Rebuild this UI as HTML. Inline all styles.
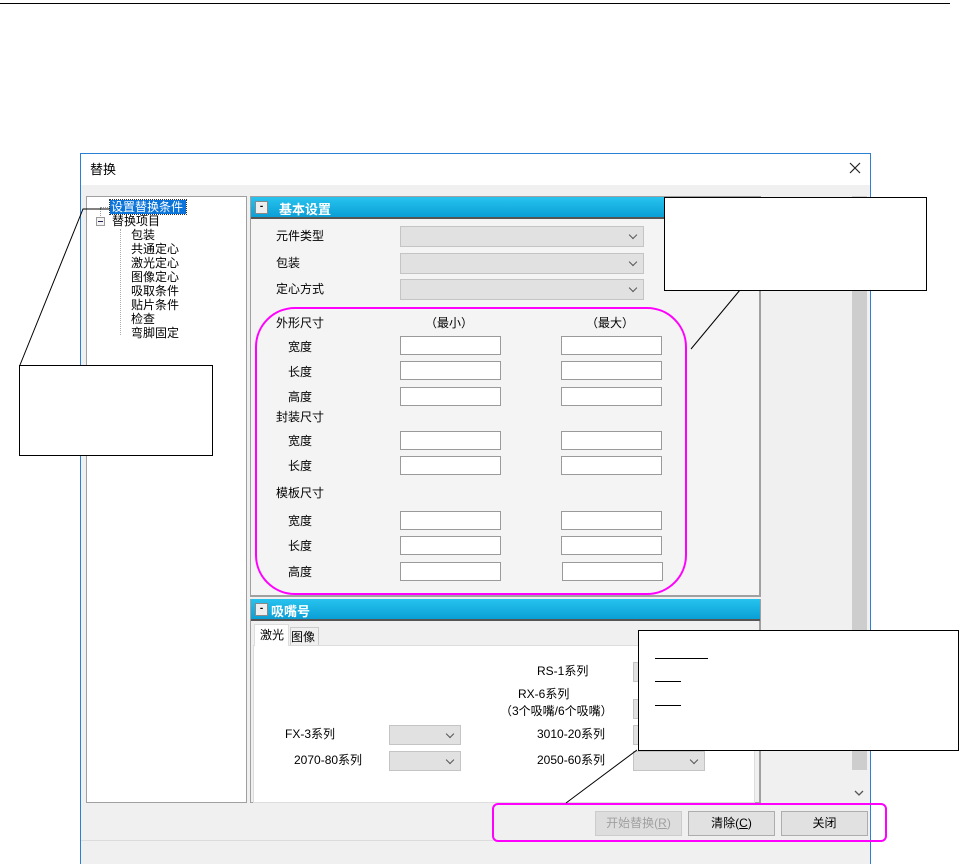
<!DOCTYPE html>
<html><head><meta charset="utf-8"><style>
*{margin:0;padding:0;box-sizing:border-box}
body{width:960px;height:864px;background:#fff;position:relative;overflow:hidden;font-family:"Liberation Sans","Noto Sans CJK SC",sans-serif;font-size:12px;color:#000}
.a{position:absolute}
.t{position:absolute;white-space:nowrap;line-height:14px}
.cb{position:absolute;background:#e1e1e1;border:1px solid #c4c4c4}
.cb:after{content:"";position:absolute;right:7px;top:5px;width:5px;height:5px;border-right:1px solid #555;border-bottom:1px solid #555;transform:rotate(45deg)}
.in{position:absolute;background:#fff;border:1px solid #9a9a9a;width:101px;height:19px}
.hdr{position:absolute;height:22px;background:linear-gradient(#27c3ee,#0a9fd6);border-bottom:2px solid #555;color:#fff;font-weight:bold;font-size:13px}
.hdr .m{position:absolute;left:4px;top:4px;width:13px;height:13px;background:#eee;border:1px solid #888;color:#000;font-size:10px;line-height:10px;text-align:center}
.btn{position:absolute;top:811px;height:25px;width:87px;background:#e1e1e1;border:1px solid #adadad;text-align:center;line-height:23px;font-size:12px}
</style></head><body>
<div class="a" style="left:0;top:3px;width:950px;height:1px;background:#000"></div>

<div class="a" style="left:80px;top:153px;width:791px;height:711px;border:1px solid #2b7fd4;border-bottom:none;background:#f0f0f0"></div>
<div class="a" style="left:81px;top:154px;width:789px;height:31px;background:#fff"></div>
<div class="t" style="left:90px;top:163px;font-size:13px">替换</div>
<svg class="a" style="left:849px;top:162px" width="12" height="12"><path d="M1 1L11 11M11 1L1 11" stroke="#222" stroke-width="1.2"/></svg>

<div class="a" style="left:86px;top:196px;width:161px;height:607px;background:#fff;border:1px solid #a0a0a0"></div>
<div class="a" style="left:110px;top:200px;width:76px;height:14px;background:#0a74da;outline:1px dotted #333"></div>
<div class="t" style="left:111px;top:200px;color:#fff;font-size:12px">设置替换条件</div>
<div class="a" style="left:100px;top:207px;width:10px;border-top:1px dotted #999"></div>
<div class="a" style="left:100px;top:208px;height:8px;border-left:1px dotted #999"></div>
<div class="a" style="left:96px;top:217px;width:9px;height:9px;border:1px solid #999;background:#f4f4f4"></div>
<div class="a" style="left:98px;top:221px;width:5px;height:1px;background:#225"></div>
<div class="t" style="left:112px;top:214px">替换项目</div>
<div class="a" style="left:120px;top:229px;height:106px;border-left:1px dotted #aaa"></div>
<div class="t" style="left:131px;top:228px;line-height:14px">包装<br>共通定心<br>激光定心<br>图像定心<br>吸取条件<br>贴片条件<br>检查<br>弯脚固定</div>

<div class="a" style="left:250px;top:196px;width:511px;height:401px;background:#f4f4f4;border:1px solid #a0a0a0;border-right:2px solid #a0a0a0;border-bottom:2px solid #a0a0a0"></div>
<div class="hdr" style="left:251px;top:197px;width:509px"><div class="m">-</div><span class="a" style="left:28px;top:2px">基本设置</span></div>
<div class="t" style="left:276px;top:229px">元件类型</div>
<div class="t" style="left:276px;top:256px">包装</div>
<div class="t" style="left:276px;top:282px">定心方式</div>
<div class="cb" style="left:400px;top:226px;width:244px;height:21px"></div>
<div class="cb" style="left:400px;top:253px;width:244px;height:21px"></div>
<div class="cb" style="left:400px;top:279px;width:244px;height:21px"></div>
<div class="t" style="left:276px;top:316px">外形尺寸</div>
<div class="t" style="left:425px;top:316px">（最小）</div>
<div class="t" style="left:586px;top:316px">（最大）</div>
<div class="t" style="left:288px;top:340px">宽度</div>
<div class="t" style="left:288px;top:365px">长度</div>
<div class="t" style="left:288px;top:390px">高度</div>
<div class="t" style="left:276px;top:410px">封装尺寸</div>
<div class="t" style="left:288px;top:434px">宽度</div>
<div class="t" style="left:288px;top:459px">长度</div>
<div class="t" style="left:276px;top:486px">模板尺寸</div>
<div class="t" style="left:288px;top:514px">宽度</div>
<div class="t" style="left:288px;top:539px">长度</div>
<div class="t" style="left:288px;top:565px">高度</div>
<div class="in" style="left:400px;top:336px"></div><div class="in" style="left:561px;top:336px"></div>
<div class="in" style="left:400px;top:361px"></div><div class="in" style="left:561px;top:361px"></div>
<div class="in" style="left:400px;top:387px"></div><div class="in" style="left:561px;top:387px"></div>
<div class="in" style="left:400px;top:431px"></div><div class="in" style="left:561px;top:431px"></div>
<div class="in" style="left:400px;top:456px"></div><div class="in" style="left:561px;top:456px"></div>
<div class="in" style="left:400px;top:511px"></div><div class="in" style="left:561px;top:511px"></div>
<div class="in" style="left:400px;top:536px"></div><div class="in" style="left:561px;top:536px"></div>
<div class="in" style="left:400px;top:562px"></div><div class="in" style="left:562px;top:562px"></div>
<div class="a" style="left:255px;top:307px;width:432px;height:288px;border:2px solid #f0f;border-radius:40px"></div>

<div class="a" style="left:852px;top:196px;width:15px;height:604px;background:#cdcdcd"></div>
<div class="a" style="left:852px;top:770px;width:15px;height:32px;background:#f0f0f0"></div>
<svg class="a" style="left:854px;top:789px" width="10" height="8"><path d="M1 2L5 6L9 2" stroke="#555" fill="none" stroke-width="1.3"/></svg>

<div class="a" style="left:250px;top:599px;width:511px;height:204px;background:#f0f0f0;border:1px solid #a0a0a0;border-right:2px solid #a0a0a0"></div>
<div class="hdr" style="left:251px;top:599px;width:509px"><div class="m">-</div><span class="a" style="left:20px;top:2px">吸嘴号</span></div>
<div class="a" style="left:253px;top:645px;width:502px;height:158px;background:#fff;border:1px solid #ddd"></div>
<div class="a" style="left:254px;top:624px;width:35px;height:22px;background:#fff;border:1px solid #ddd;border-bottom:none"></div>
<div class="t" style="left:260px;top:628px">激光</div>
<div class="a" style="left:290px;top:627px;width:29px;height:18px;background:#f0f0f0;border:1px solid #ccc;border-bottom:none"></div>
<div class="t" style="left:291px;top:630px">图像</div>
<div class="t" style="left:537px;top:664px">RS-1系列</div>
<div class="t" style="left:518px;top:687px">RX-6系列</div>
<div class="t" style="left:500px;top:704px">（3个吸嘴/6个吸嘴）</div>
<div class="t" style="left:285px;top:727px">FX-3系列</div>
<div class="t" style="left:294px;top:753px">2070-80系列</div>
<div class="t" style="left:537px;top:727px">3010-20系列</div>
<div class="t" style="left:537px;top:753px">2050-60系列</div>
<div class="cb" style="left:633px;top:662px;width:52px;height:20px"></div>
<div class="cb" style="left:633px;top:699px;width:52px;height:20px"></div>
<div class="cb" style="left:389px;top:725px;width:72px;height:20px"></div>
<div class="cb" style="left:389px;top:751px;width:72px;height:20px"></div>
<div class="cb" style="left:633px;top:725px;width:72px;height:20px"></div>
<div class="cb" style="left:633px;top:751px;width:72px;height:20px"></div>

<div class="btn" style="left:595px;color:#a0a0a0;border-color:#ccc;background:#ddd">开始替换(<u>R</u>)</div>
<div class="btn" style="left:688px">清除(<u>C</u>)</div>
<div class="btn" style="left:781px">关闭</div>
<div class="a" style="left:81px;top:840px;width:789px;height:1px;background:#dcdcdc"></div>
<div class="a" style="left:492px;top:803px;width:395px;height:39px;border:2px solid #f0f;border-radius:6px"></div>

<svg class="a" style="left:0;top:0" width="960" height="864">
<path d="M20 365L83 209L110 209" stroke="#000" fill="none"/>
<path d="M740 290L691 349" stroke="#000" fill="none"/>
<path d="M637 750L566 803" stroke="#000" fill="none"/>
</svg>
<div class="a" style="left:19px;top:365px;width:194px;height:91px;background:#fff;border:1px solid #000"></div>
<div class="a" style="left:664px;top:197px;width:263px;height:94px;background:#fff;border:1px solid #000"></div>
<div class="a" style="left:638px;top:630px;width:321px;height:121px;background:#fff;border:1px solid #000"></div>
<div class="a" style="left:655px;top:658px;width:53px;height:1px;background:#000"></div>
<div class="a" style="left:655px;top:681px;width:26px;height:1px;background:#000"></div>
<div class="a" style="left:655px;top:705px;width:26px;height:1px;background:#000"></div>
</body></html>
